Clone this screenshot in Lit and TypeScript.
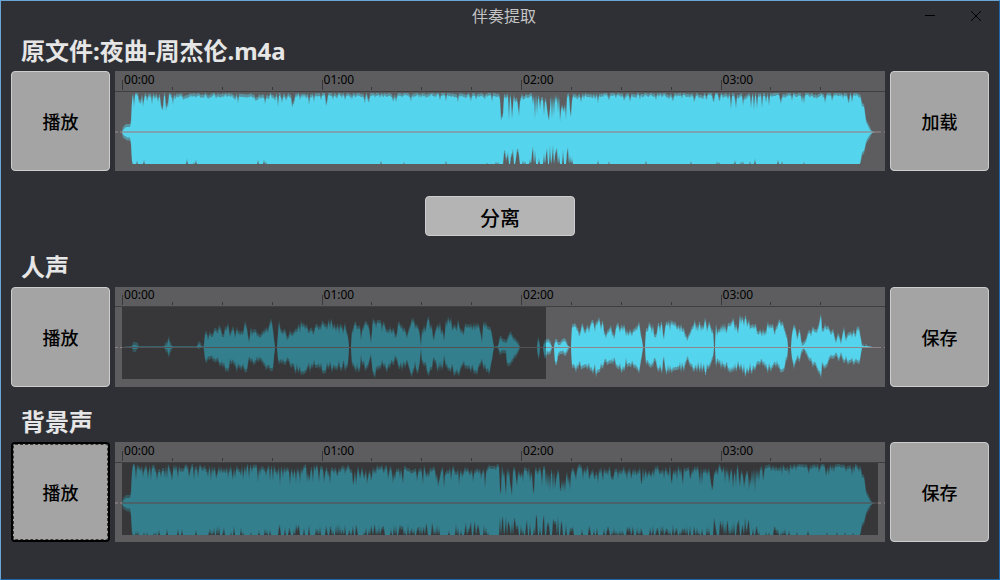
import { LitElement, html, svg, css } from "lit";
import { customElement, property } from "lit/decorators.js";
import { styleMap } from "lit/directives/style-map.js";

type Sample = [number, number, number];

const CENTER = 40;
const WIDTH = 770;

// Deterministic noise, so that a track always gets the same outline.
function noise(seed: number) {
  let s = seed;
  return () => {
    s = (s * 1664525 + 1013904223) % 4294967296;
    return s / 4294967296;
  };
}

// Triples: offset in the plot, level above the axis, level below it.
function triples(text: string): Sample[] {
  return text
    .trim()
    .split(/\s+/)
    .map((t) => t.split(",").map(Number) as Sample);
}

const VOCALS = triples(`
7,0,0 17,0.5,0.5 18,2,1.5 21,2,1.5 24,0.5,0.5 49,0.5,0.5 51,2,2 52,2,2 53,7,6 54,8,7 55,2,2 57,1,1 59,0.5,0.5
82,0.5,0.5 84,3,1 86,1,0.5 88,0,0 89,1,1 90,12,11 91,14,13 93,8,12 95,12,9 97,10,9 99,14,12 102,18,14 105,19,16
108,11,18 110,17,19 113,20,24 115,14,16 118,17,13 120,13,18 123,18,22 125,13,17 128,15,20 130,22,24
132,17,22 134,4,10 136,17,13 139,16,14 142,15,12 145,9,10 148,14,15 150,20,20 153,16,20 155,23,19
156,28,20 158,15,19 160,0,0 162,0,0 163,14,10 164,22,13 166,14,13 169,17,14 172,10,14 175,14,18
178,11,15 180,14,22 183,20,24 187,23,26 191,19,22 195,18,21 198,15,17 202,19,18 206,24,22 209,19,26
212,22,21 216,24,20 220,25,26 224,19,18 227,22,23 229,17,15 230,20,22 233,10,15 234,0,0 236,0,0
237,16,16 239,20,20 242,22,23 245,18,20 246,8,9 248,26,19 251,25,20 254,19,14 256,3,6 258,28,26
260,25,29 263,23,20 268,22,15 272,14,20 276,19,18 280,12,11 284,23,19 289,22,20 292,8,12 295,22,21
297,28,26 300,23,19 303,20,22 305,14,15 306,0,0 307,15,15 310,22,20 314,29,28 317,18,18 319,7,10
321,20,19 325,21,20 328,14,18 329,5,7 331,24,18 333,28,22 337,24,23 340,18,26 343,24,27 346,14,18
350,21,19 354,19,19 357,25,23 360,23,28 363,20,21 365,16,15 367,5,14 368,22,19 370,27,24 372,20,22
375,17,24 377,12,10 379,0,0 383,1,0 385,8,5 387,9,4 389,5,3 391,4,3 392,5,15 395,14,15 397,10,12 401,5,7
404,1,1 405,0,0 422,0,0 423,10,10 424,5,10 425,0,0 428,0,0 430,6,12 432,4,3 433,7,5 435,3,4 437,0,0
439,0,0 440,5,13 442,5,14 443,2,6 446,3,4 448,6,3 450,5,6 453,1,1 455,0,0 456,0,0 457,22,20 459,20,16
462,20,24 464,10,14 467,21,21 470,15,17 473,20,18 477,24,21 481,22,25 484,26,23 488,23,19 491,12,14
493,14,15 496,18,14 499,11,14 502,22,18 505,20,22 509,20,23 511,14,14 513,17,22 515,15,17 518,14,16
521,17,20 524,22,22 526,13,14 528,0,0 530,0,0 531,18,16 533,21,16 538,19,19 540,10,11 542,20,24
547,21,22 549,7,10 551,25,24 555,25,23 560,22,20 563,19,18 566,21,21 567,15,15 569,17,22 572,8,12
575,14,16 579,22,22 584,24,20 587,19,22 590,28,26 592,21,22 594,22,20 598,15,10 599,0,0 600,0,0
601,20,17 603,14,12 606,22,19 610,20,20 614,20,22 618,25,21 621,19,21 623,14,14 625,28,21 629,30,25
632,26,26 636,21,22 642,18,18 647,16,15 650,14,18 653,25,22 658,19,20 660,14,16 663,25,18 668,21,23
670,16,16 672,9,10 673,0,0 676,0,0 678,22,20 680,22,18 682,8,8 684,15,12 685,14,11 687,1,2 689,3,1
691,5,4 692,14,8 696,14,13 698,18,16 701,15,15 704,20,25 706,29,28 708,15,15 710,20,20 714,16,10
718,15,9 721,4,5 723,14,12 726,4,6 729,16,13 731,5,9 733,12,15 737,13,13 740,14,16 742,20,14
743,24,16 745,12,11 747,1,0 751,1,0 758,0,0`);

function shapeVocals(): Sample[] {
  const rnd = noise(7);
  const out: Sample[] = [];
  for (let i = 0; i < VOCALS.length - 1; i++) {
    const [x0, u0, d0] = VOCALS[i];
    const [x1, u1, d1] = VOCALS[i + 1];
    for (let x = x0; x < x1; x++) {
      const t = (x - x0) / (x1 - x0);
      const u = u0 + (u1 - u0) * t;
      const d = d0 + (d1 - d0) * t;
      const nick = rnd() < 0.25 ? 0.75 : 1;
      out.push([x, u * nick * (0.86 + rnd() * 0.24), d * nick * (0.86 + rnd() * 0.24)]);
    }
  }
  return out;
}

// Parts of a dense mix: end offset, dip of the crest, chance of a deep dip,
// its depth, chance and height of gaps along the foot.
type Part = [number, number, number, number, number, number];

const SONG: Part[] = [
  [60, 6, 0.25, 18, 0.08, 7],
  [155, 6, 0.2, 11, 0.1, 6],
  [180, 7, 0.35, 15, 0.1, 7],
  [250, 6, 0.25, 13, 0.06, 6],
  [385, 5, 0.18, 10, 0.03, 4],
  [406, 10, 0.6, 28, 0.6, 16],
  [416, 6, 0.2, 12, 0.2, 6],
  [457, 10, 0.55, 30, 0.5, 20],
  [595, 5, 0.2, 11, 0.03, 4],
  [665, 6, 0.25, 18, 0.08, 6],
  [748, 5, 0.2, 12, 0.03, 4],
];

const BACKING: Part[] = [
  [85, 9, 0.3, 20, 0.12, 7],
  [160, 10, 0.35, 20, 0.2, 10],
  [245, 13, 0.35, 22, 0.4, 12],
  [310, 12, 0.35, 21, 0.4, 11],
  [372, 13, 0.4, 26, 0.5, 14],
  [384, 5, 0.1, 7, 0.2, 4],
  [406, 14, 0.6, 33, 0.65, 22],
  [457, 13, 0.5, 31, 0.55, 21],
  [550, 13, 0.35, 20, 0.4, 10],
  [590, 13, 0.35, 23, 0.3, 12],
  [640, 13, 0.45, 29, 0.55, 19],
  [670, 9, 0.3, 18, 0.4, 9],
  [748, 6, 0.25, 13, 0.15, 6],
];

function shapeMix(parts: Part[], seed: number): Sample[] {
  const rnd = noise(seed);
  const out = triples("7,0,0 8,2,2 9,3,3 11,5,4 12,5,5 15,5,5 16,9,10 17,30,28");
  let p = 0;
  let swell = 0;
  for (let x = 18; x <= 744; x++) {
    while (x > parts[p][0]) p++;
    const [, dip, chance, depth, footChance, foot] = parts[p];
    swell = swell * 0.8 + rnd() * dip * 0.2;
    const deep = rnd() < chance ? depth * (0.3 + rnd() * 0.7) : 0;
    const gap = rnd() < footChance ? foot * (0.3 + rnd() * 0.7) : 0;
    const crest = swell * (0.4 + rnd()) + (rnd() < 0.3 ? 0 : dip * 0.2);
    out.push([x, 39 - Math.max(crest, deep), 31.5 - gap]);
  }
  return out.concat(
    triples("745,35,31 746,32,26 747,26,20 749,25,18 750,18,14 751,10,9 753,6,5 755,2,2 757,0.5,0.5 759,0,0"),
  );
}

function outline(samples: Sample[], extra: number): string {
  const grow = (v: number, max: number) => (v < 1 ? v : Math.min(v + extra, max));
  const top = samples.map(([x, u]) => `${x},${(CENTER - grow(u, 39)).toFixed(1)}`);
  const foot = samples.map(([x, , d]) => `${x},${(CENTER + 0.5 + grow(d, 31.5)).toFixed(1)}`).reverse();
  return `M${top.join("L")}L${foot.join("L")}Z`;
}

interface Track {
  samples: Sample[];
  start: number;
  end: number;
  axis: number;
  ruler: number;
}

const TRACKS: Record<string, Track> = {
  song: { samples: shapeMix(SONG, 11), start: 7, end: 7, axis: 2, ruler: 20 },
  vocals: { samples: shapeVocals(), start: 7, end: 431, axis: 1, ruler: 19 },
  backing: { samples: shapeMix(BACKING, 29), start: 7, end: 763, axis: 2, ruler: 20 },
};

@customElement("wave-view")
export class WaveView extends LitElement {
  @property() track = "song";

  static styles = css`
    :host {
      display: flex;
      flex-direction: column;
      min-width: 0;
      height: 100px;
      background: #5d5d5f;
      overflow: hidden;
    }
    .ruler {
      display: flex;
      flex: none;
      padding-left: 7px;
      border-bottom: 1px solid #3f3f41;
    }
    .mark {
      flex: 1 1 0;
      width: 0;
      background: linear-gradient(#38383a, #38383a) 0 calc(100% - 1px) / 1px 3px no-repeat;
    }
    .major {
      background-size: 1px 10px;
    }
    .tail {
      flex: 0.3 1 0;
    }
    .time {
      display: block;
      padding-left: 2px;
      font: 12px/17px "Noto Sans", "Open Sans", sans-serif;
      color: #000;
      white-space: nowrap;
    }
    .short .time {
      line-height: 15px;
    }
    .plot {
      display: block;
      flex: 1;
      width: 100%;
      min-height: 0;
    }
    .wave {
      fill: #55d4ed;
    }
    .soft {
      fill: #55d4ed;
      opacity: 0.45;
    }
    .axis {
      fill: #8f8589;
      opacity: 0.6;
    }
    .thin {
      opacity: 0.95;
    }
    .played {
      fill: #000;
      opacity: 0.4;
    }
  `;

  render() {
    const t = TRACKS[this.track];
    const marks = Array.from({ length: 15 }, (_, i) => i);
    const y = t.axis === 2 ? CENTER - 1 : CENTER;
    const axisClass = t.axis === 2 ? "axis" : "axis thin";
    return html`
      <div class="ruler ${t.ruler < 20 ? "short" : ""}" style=${styleMap({ height: `${t.ruler}px` })}>
        ${marks.map((i) =>
          i % 4 === 0
            ? html`<div class="mark major"><span class="time">0${i / 4}:00</span></div>`
            : html`<div class="mark"></div>`,
        )}
        <div class="tail"></div>
      </div>
      <svg class="plot" viewBox="0 0 ${WIDTH} ${99 - t.ruler}" preserveAspectRatio="none" aria-hidden="true">
        ${svg`
          <path class="soft" d=${outline(t.samples, 3)} />
          <path class="wave" d=${outline(t.samples, 0)} />
          <rect class=${axisClass} x="0" y=${y} width="3" height=${t.axis} />
          <rect class=${axisClass} x="5" y=${y} width="761" height=${t.axis} />
          <rect class=${axisClass} x="769" y=${y} width="1" height=${t.axis} />
          <rect class="played" x=${t.start} y="0" width=${t.end - t.start} height="72" />
        `}
      </svg>
    `;
  }
}

@customElement("app-root")
export class AppRoot extends LitElement {
  static styles = css`
    :host {
      display: block;
      font-family: "Noto Sans", "Noto Sans CJK SC", sans-serif;
    }
    .window {
      box-sizing: border-box;
      min-height: 100vh;
      background: #2f3035;
      border: 1px solid;
      border-color: #6ba5d6 #1f66a8 #1f66a8 #6ba5d6;
    }
    .titlebar {
      display: flex;
      height: 30px;
      padding-left: 100px;
    }
    .title {
      flex: 1;
      margin: 0;
      text-align: center;
      font-size: 16px;
      line-height: 30px;
      font-weight: 400;
      color: #c4c4c4;
    }
    .control {
      width: 46px;
      padding: 0;
      border: 0;
      background: none;
    }
    .control svg {
      display: block;
      margin: auto;
    }
    .section {
      padding: 0 10px;
    }
    .heading {
      margin: 0;
      padding-left: 10px;
      font: 700 24px/40px "Noto Sans", "Noto Sans CJK SC", sans-serif;
      color: #e6e6e6;
    }
    .row {
      display: grid;
      grid-template-columns: 99px minmax(0, 1fr) 99px;
      gap: 5px;
    }
    .button {
      box-sizing: border-box;
      padding: 0;
      border: 1px solid #cdcdcd;
      border-radius: 4px;
      background: #a4a4a4;
      color: #000;
      font: 500 18px/24px "Noto Sans CJK SC", sans-serif;
    }
    .focused {
      border: 2px solid #000;
      outline: 1px dashed #3a3a3a;
      outline-offset: -3px;
    }
    .split {
      display: block;
      width: 150px;
      height: 40px;
      margin: 25px auto 11px;
      padding-top: 3px;
      background: #b4b4b4;
      font-size: 20px;
    }
    .last {
      padding-top: 15px;
    }
  `;

  private section(title: string, track: string, action: string, last = false) {
    return html`
      <section class="section ${last ? "last" : ""}">
        <h2 class="heading">${title}</h2>
        <div class="row">
          <button class="button ${last ? "focused" : ""}" type="button">播放</button>
          <wave-view .track=${track}></wave-view>
          <button class="button" type="button">${action}</button>
        </div>
      </section>
    `;
  }

  render() {
    return html`
      <main class="window">
        <header class="titlebar">
          <h1 class="title">伴奏提取</h1>
          <button class="control" type="button" aria-label="最小化">
            <svg width="12" height="12" viewBox="0 0 12 12" shape-rendering="crispEdges">
              <path d="M1 5.5H11" stroke="#000" fill="none" />
            </svg>
          </button>
          <button class="control" type="button" aria-label="关闭">
            <svg width="12" height="12" viewBox="0 0 12 12">
              <path d="M1 1L11 11M11 1L1 11" stroke="#000" fill="none" />
            </svg>
          </button>
        </header>
        ${this.section("原文件:夜曲-周杰伦.m4a", "song", "加载")}
        <button class="button split" type="button">分离</button>
        ${this.section("人声", "vocals", "保存")}
        ${this.section("背景声", "backing", "保存", true)}
      </main>
    `;
  }
}
